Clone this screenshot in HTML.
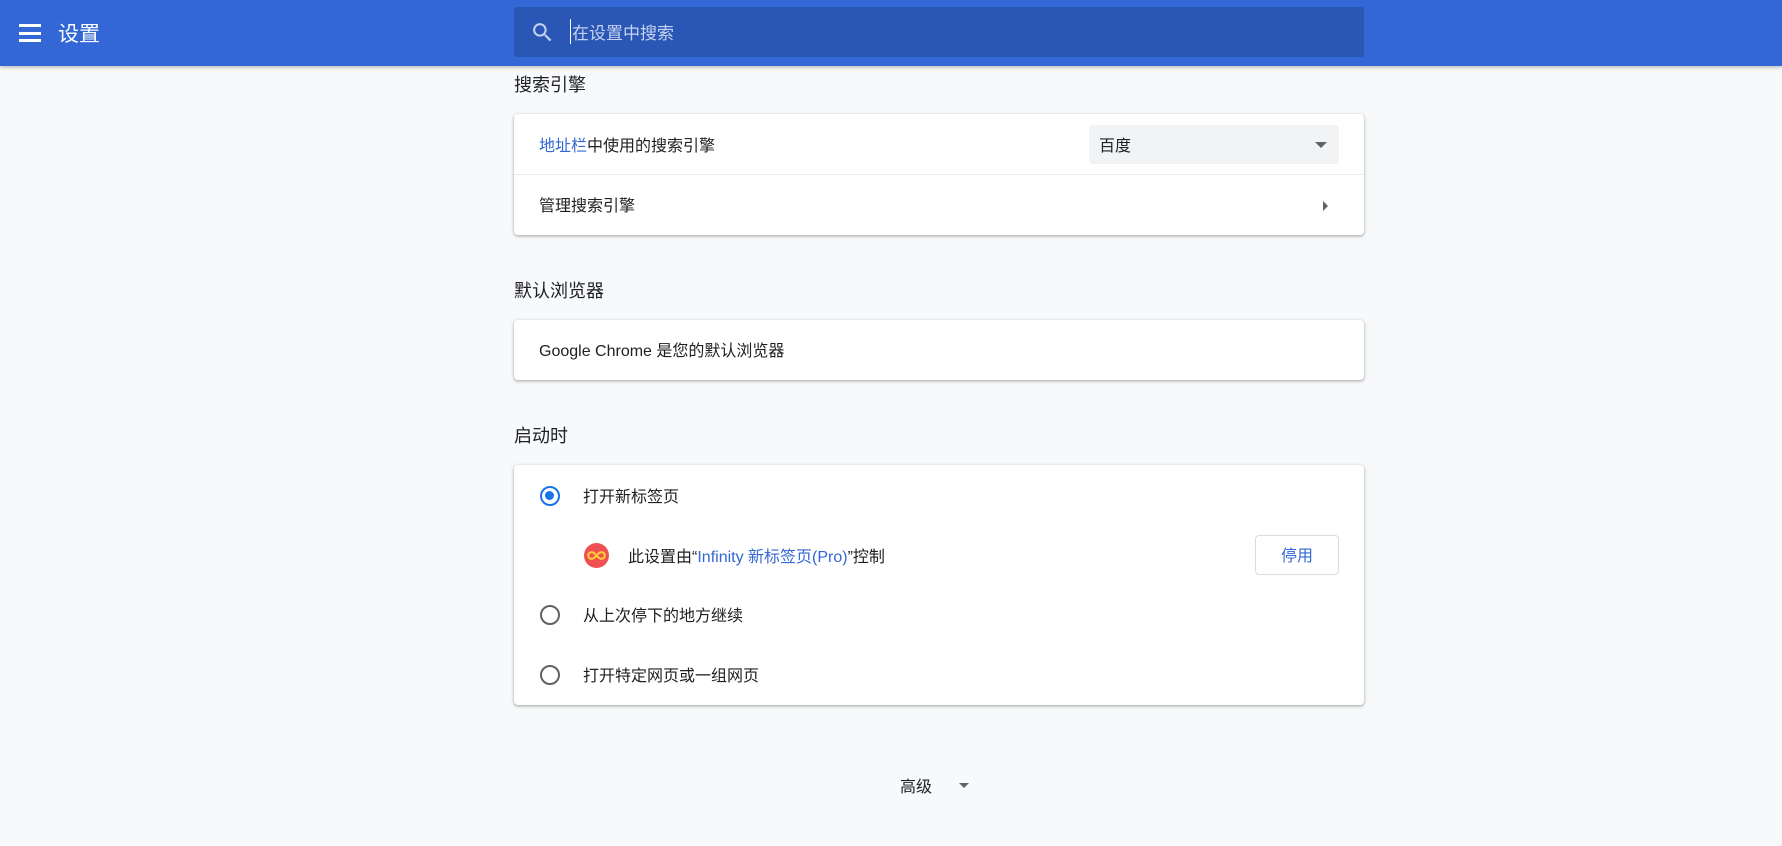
<!DOCTYPE html>
<html><head><meta charset="utf-8"><style>
*{box-sizing:border-box;margin:0;padding:0}
body{width:1782px;height:846px;background:#f8f9fa;font-family:"Liberation Sans","Noto Sans CJK SC",sans-serif;color:#202124;position:relative;overflow:hidden;font-size:16px}
.hdr{position:absolute;left:0;top:0;width:1782px;height:66px;background:#3367d6;box-shadow:0 1px 4px rgba(0,0,0,.3)}
.menu{position:absolute;left:19px;top:24px;width:22px;height:18px}
.menu i{display:block;height:3px;background:#fff;margin-bottom:4.5px}
.title{position:absolute;left:58px;top:18px;color:#fff;font-size:21px}
.search{position:absolute;left:514px;top:7px;width:850px;height:50px;background:#2a56b5;border-radius:2px}
.search .ph{position:absolute;left:56px;top:12px;color:#c5d3f0;font-size:17px;border-left:1px solid #fff;padding-left:1px}
.h{position:absolute;left:514px;font-size:18px;color:#202124}
.card{position:absolute;left:514px;width:850px;background:#fff;border-radius:4px;box-shadow:0 1px 2px rgba(60,64,67,.3),0 1px 3px 1px rgba(60,64,67,.15)}
.t{position:absolute;font-size:16px;white-space:nowrap}
.blue{color:#3367d6}
.radio{position:absolute;left:26px;width:20px;height:20px;border-radius:50%;border:2.5px solid #5f6368}
.radio.on{border-color:#1a73e8}
.radio.on::after{content:"";position:absolute;left:3px;top:3px;width:9px;height:9px;border-radius:50%;background:#1a73e8}
</style></head><body>
<div class="hdr">
<div class="menu"><i></i><i></i><i></i></div>
<div class="title">设置</div>
<div class="search">
<svg style="position:absolute;left:16px;top:13px" width="25" height="25" viewBox="0 0 24 24"><path d="M15.5 14h-.79l-.28-.27A6.5 6.5 0 1 0 9.5 16a6.47 6.47 0 0 0 4.23-1.57l.27.28v.79l5 4.99L20.49 19l-4.99-5zm-6 0C7.01 14 5 11.99 5 9.5S7.01 5 9.5 5 14 7.01 14 9.5 11.99 14 9.5 14z" fill="#c5d3f0"/></svg>
<div class="ph">在设置中搜索</div>
</div>
</div>

<div class="h" style="top:71px">搜索引擎</div>
<div class="card" style="top:114px;height:121px">
<div class="t" style="left:25px;top:18px"><span class="blue">地址栏</span>中使用的搜索引擎</div>
<div style="position:absolute;left:575px;top:11px;width:250px;height:39px;background:#f1f3f4;border-radius:4px">
<div class="t" style="left:10px;top:7px">百度</div>
<div style="position:absolute;right:12px;top:17px;width:0;height:0;border-left:6px solid transparent;border-right:6px solid transparent;border-top:6px solid #5f6368"></div>
</div>
<div style="position:absolute;left:0;right:0;top:60px;height:1px;background:#e8eaed"></div>
<div class="t" style="left:25px;top:78px">管理搜索引擎</div>
<div style="position:absolute;left:809px;top:87px;width:0;height:0;border-top:5px solid transparent;border-bottom:5px solid transparent;border-left:5px solid #5f6368"></div>
</div>

<div class="h" style="top:277px">默认浏览器</div>
<div class="card" style="top:320px;height:60px">
<div class="t" style="left:25px;top:17px">Google Chrome 是您的默认浏览器</div>
</div>

<div class="h" style="top:422px">启动时</div>
<div class="card" style="top:465px;height:240px">
<div class="radio on" style="top:21px"></div>
<div class="t" style="left:69px;top:18px">打开新标签页</div>
<svg style="position:absolute;left:70px;top:78px" width="25" height="25" viewBox="0 0 25 25"><circle cx="12.5" cy="12.5" r="12.5" fill="#f05050"/><path d="M12.5 12.5c-2-2.5-3.5-3.3-5-3.3a3.3 3.3 0 0 0 0 6.6c1.5 0 3-.8 5-3.3s3.5-3.3 5-3.3a3.3 3.3 0 0 1 0 6.6c-1.5 0-3-.8-5-3.3z" fill="none" stroke="#ffc83a" stroke-width="2.2"/></svg>
<div class="t" style="left:114px;top:78px">此设置由“<span class="blue">Infinity 新标签页(Pro)</span>”控制</div>
<div style="position:absolute;left:741px;top:70px;width:84px;height:40px;border:1px solid #dadce0;border-radius:4px;color:#3367d6;text-align:center;line-height:42px;font-size:16px">停用</div>
<div class="radio" style="top:140px"></div>
<div class="t" style="left:69px;top:137px">从上次停下的地方继续</div>
<div class="radio" style="top:200px"></div>
<div class="t" style="left:69px;top:197px">打开特定网页或一组网页</div>
</div>

<div class="t" style="left:900px;top:773px">高级</div>
<div style="position:absolute;left:959px;top:783px;width:0;height:0;border-left:5.5px solid transparent;border-right:5.5px solid transparent;border-top:5.5px solid #5f6368"></div>
</body></html>
